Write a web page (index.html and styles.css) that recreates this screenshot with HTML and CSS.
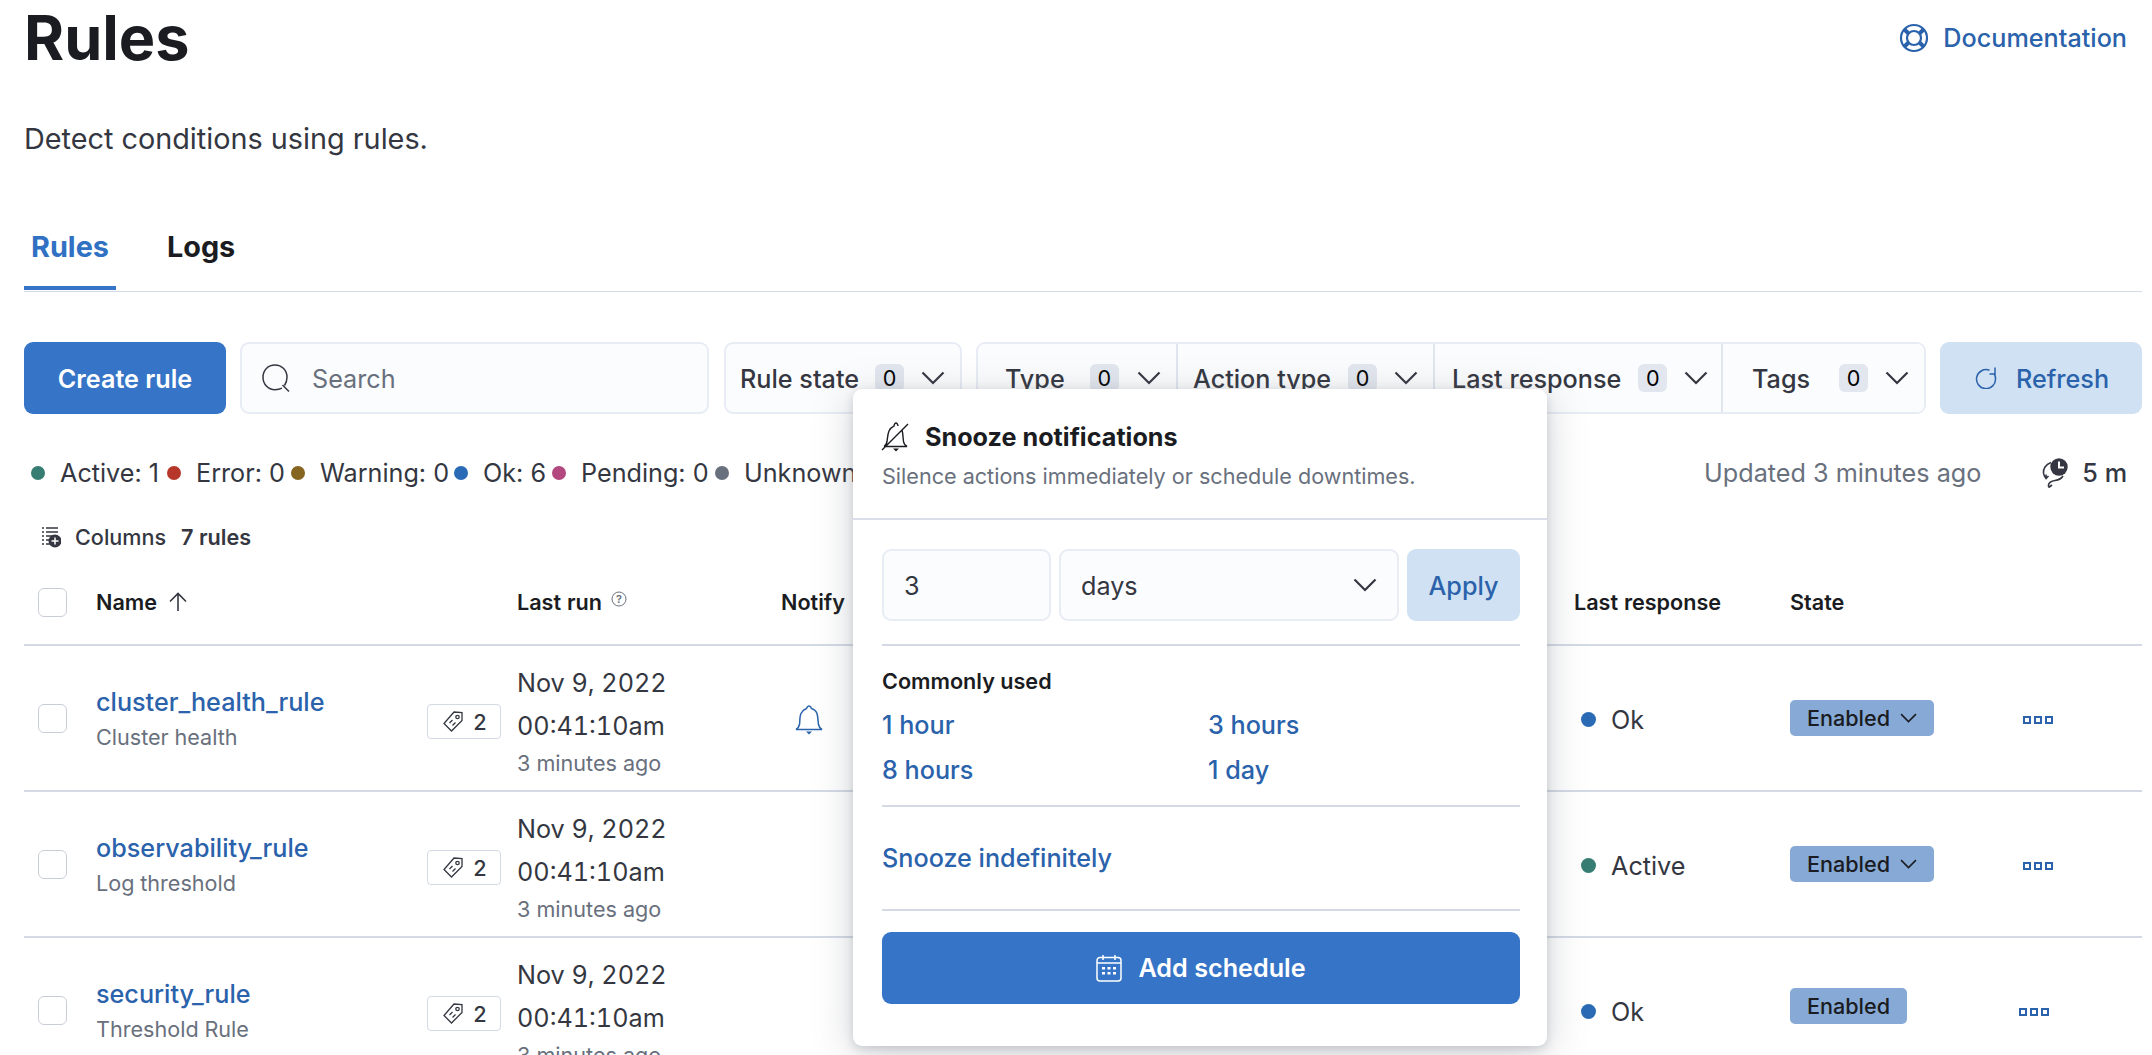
FILE: index.html
```html
<!DOCTYPE html>
<html lang="en">
<head>
<meta charset="utf-8">
<title>Rules</title>
<link rel="stylesheet" href="styles.css">
</head>
<body>
<svg class="defs" width="0" height="0" aria-hidden="true">
  <symbol id="i-chev" viewBox="0 0 24 14"><path d="M1.5 1.5 12 12 22.5 1.5" fill="none" stroke="currentColor" stroke-width="2.2"/></symbol>
  <symbol id="i-tag" viewBox="0 0 20 21"><g fill="none" stroke="currentColor" stroke-width="1.300"><path d="M11 1 19 1.500 19 9.500 8.500 20 1 12.500z"/><circle cx="14.500" cy="6" r="1.700"/><path d="M6.500 12 9.500 9M9.500 14.500 12.500 11.500"/></g></symbol>
  <symbol id="i-dots" viewBox="0 0 30 8"><g fill="none" stroke="currentColor" stroke-width="2"><rect x="1" y="1" width="6" height="6"/><rect x="12" y="1" width="6" height="6"/><rect x="23" y="1" width="6" height="6"/></g></symbol>
</svg>
<main class="page">
  <header class="head">
    <h1 class="title">Rules</h1>
    <a class="doc-link">
      <svg class="doc-icon" viewBox="0 0 30 30"><g fill="none" stroke="currentColor" stroke-width="2.200"><circle cx="15" cy="15" r="13"/><circle cx="15" cy="15" r="7"/><path d="M5.500 6.500 10 11M24.500 6.500 20 11M5.500 23.500 10 19M24.500 23.500 20 19" stroke-width="4"/></g></svg>
      <span>Documentation</span>
    </a>
  </header>
  <p class="desc">Detect conditions using rules.</p>
  <nav class="tabs">
    <span class="tab tab-active">Rules</span>
    <span class="tab">Logs</span>
  </nav>
  <section class="toolbar">
    <button class="btn-primary create">Create rule</button>
    <div class="search">
      <svg class="search-icon" viewBox="0 0 28 28"><g fill="none" stroke="currentColor" stroke-width="1.500"><path d="M20 24.200C18 25.200 16 25.700 13 25.700 6 25.700 1 20 1 13.200S6 1 13 1 25 6.500 25 13.200c0 3.500-1 6-2.500 8.300"/><path d="M20.500 21 27 27.500"/></g></svg>
      <span class="nudge">Search</span>
    </div>
    <div class="filter filter-single">
      <span class="f-label">Rule state</span><span class="count">0</span><svg class="chev"><use href="#i-chev"/></svg>
    </div>
    <div class="filter-group">
      <div class="filter f-type"><span class="f-label">Type</span><span class="count">0</span><svg class="chev"><use href="#i-chev"/></svg></div>
      <div class="filter f-action"><span class="f-label">Action type</span><span class="count">0</span><svg class="chev"><use href="#i-chev"/></svg></div>
      <div class="filter f-resp"><span class="f-label">Last response</span><span class="count">0</span><svg class="chev"><use href="#i-chev"/></svg></div>
      <div class="filter f-tags"><span class="f-label">Tags</span><span class="count">0</span><svg class="chev"><use href="#i-chev"/></svg></div>
    </div>
    <button class="refresh">
      <svg class="refresh-icon" viewBox="0 0 22 22"><g fill="none" stroke="currentColor" stroke-width="1.500"><path d="M14.500 3.300A9.500 9.500 0 1 0 20.500 11.500c0-2-.6-3.700-1.600-5"/><path d="M20 .5V7h-5.500"/></g></svg>
      <span class="nudge">Refresh</span>
    </button>
  </section>
  <section class="status">
    <div class="stat s-active"><i class="dot d-green"></i><span>Active: 1</span></div>
    <div class="stat s-error"><i class="dot d-red"></i><span>Error: 0</span></div>
    <div class="stat s-warn"><i class="dot d-gold"></i><span>Warning: 0</span></div>
    <div class="stat s-ok"><i class="dot d-blue"></i><span>Ok: 6</span></div>
    <div class="stat s-pend"><i class="dot d-pink"></i><span>Pending: 0</span></div>
    <div class="stat s-unk"><i class="dot d-gray"></i><span>Unknown: 0</span></div>
    <span class="updated">Updated 3 minutes ago</span>
    <svg class="clock-icon" viewBox="0 0 26 30"><g fill="none" stroke="currentColor" stroke-width="1.600"><path d="M9 4.500C3.500 6.500 1 11 1.500 15c.3 2.500 1.200 4 2.500 5.500l2.500-2.500M4 20.500V16.500"/><path d="M21 18c-2 3.500-5 4-8 4.500s-6 1.500-6.500 4.500c0 1 0 1.500.3 2.500M6.800 29.500l3.200-2.500"/></g><circle cx="17" cy="9" r="8.700" fill="currentColor"/><path d="M17 3.500v6h5" fill="none" stroke="#fff" stroke-width="2"/></svg>
    <span class="interval">5 m</span>
  </section>
  <section class="columns-bar">
    <svg class="col-icon" viewBox="0 0 20 22"><path d="M1 2h2M5 2h12M1 6h2M5 6h12M1 10h2M5 10h8M1 14h2M5 14h5M1 18h2M5 18h4" stroke="#343741" stroke-width="1.400" fill="none"/><circle cx="14" cy="15" r="6.500" fill="#343741"/><path d="M14 11.500v7M10.500 15h7" stroke="#fff" stroke-width="1.500"/></svg>
    <span class="col-btn">Columns</span>
    <span class="col-count">7 rules</span>
  </section>
  <section class="table">
    <div class="t-row t-head">
      <div class="c-check"><span class="checkbox"></span></div>
      <div class="c-name th"><span>Name</span><svg class="sort" viewBox="0 0 20 20"><path d="M10 19V1.500M2 9.500l8-8 8 8" fill="none" stroke="currentColor" stroke-width="1.600"/></svg></div>
      <div></div>
      <div class="c-run th"><span>Last run</span><svg class="help" viewBox="0 0 16 16"><circle cx="8" cy="8" r="7" fill="none" stroke="#69707d" stroke-width="1"/><text x="8" y="11.500" class="help-q">?</text></svg></div>
      <div class="th">Notify</div>
      <div class="th">Last response</div>
      <div class="th">State</div>
      <div></div>
    </div>
    <div class="t-row">
      <div class="c-check"><span class="checkbox"></span></div>
      <div class="c-rule"><a class="rule-name">cluster_health_rule</a><span class="rule-type">Cluster health</span></div>
      <div class="c-tag"><span class="tag"><svg class="tag-icon"><use href="#i-tag"/></svg>2</span></div>
      <div class="c-date"><span>Nov 9, 2022</span><span>00:41:10am</span><small>3 minutes ago</small></div>
      <div class="c-bell"><svg class="bell" viewBox="0 0 28 30"><g fill="none" stroke="currentColor" stroke-width="1.500"><path d="M1 24.500c2-1 3-2.500 3.500-5 .5-3 0-8 1.500-11S10 4 11.500 3.500C12 2 13 1 14 1s2 1 2.500 2.500C18 4 21 5.500 22 8.500s1 8 1.500 11c.5 2.500 1.500 4 3.500 5z"/></g><path d="M11 26.500h6l-3 3z" fill="currentColor"/></svg></div>
      <div class="resp"><i class="dot d-blue"></i><span>Ok</span></div>
      <div><span class="state">Enabled<svg class="state-chev"><use href="#i-chev"/></svg></span></div>
      <div class="c-act"><svg class="more more-shift"><use href="#i-dots"/></svg></div>
    </div>
    <div class="t-row">
      <div class="c-check"><span class="checkbox"></span></div>
      <div class="c-rule"><a class="rule-name">observability_rule</a><span class="rule-type">Log threshold</span></div>
      <div class="c-tag"><span class="tag"><svg class="tag-icon"><use href="#i-tag"/></svg>2</span></div>
      <div class="c-date"><span>Nov 9, 2022</span><span>00:41:10am</span><small>3 minutes ago</small></div>
      <div></div>
      <div class="resp"><i class="dot d-green"></i><span>Active</span></div>
      <div><span class="state">Enabled<svg class="state-chev"><use href="#i-chev"/></svg></span></div>
      <div class="c-act"><svg class="more more-shift"><use href="#i-dots"/></svg></div>
    </div>
    <div class="t-row">
      <div class="c-check"><span class="checkbox"></span></div>
      <div class="c-rule"><a class="rule-name">security_rule</a><span class="rule-type">Threshold Rule</span></div>
      <div class="c-tag"><span class="tag"><svg class="tag-icon"><use href="#i-tag"/></svg>2</span></div>
      <div class="c-date"><span>Nov 9, 2022</span><span>00:41:10am</span><small>3 minutes ago</small></div>
      <div></div>
      <div class="resp"><i class="dot d-blue"></i><span>Ok</span></div>
      <div class="c-state-plain"><span class="state">Enabled</span></div>
      <div class="c-act"><svg class="more"><use href="#i-dots"/></svg></div>
    </div>
  </section>
</main>
<aside class="popover">
  <div class="pop-head">
    <div class="pop-title">
      <svg class="snooze-icon" viewBox="0 0 28 30"><g fill="none" stroke="#1a1c21" stroke-width="1.400"><path d="M3 24.500c2-1 2.500-2.500 3-5 .5-3 .5-7 2-10.500S12 4.500 13 4c.3-1.700 1-3 2-3s1.700 1.300 2 3M21 8c1 3 1 8 1.500 11.500.4 2.500 1.500 4 3.500 5H3M1 28 27 2"/></g><path d="M12 26.500h6l-3 3z" fill="#1a1c21"/></svg>
      <span>Snooze notifications</span>
    </div>
    <p class="pop-sub">Silence actions immediately or schedule downtimes.</p>
  </div>
  <div class="pop-body">
    <div class="snooze-form">
      <div class="field f-num"><span class="nudge">3</span></div>
      <div class="field f-unit"><span class="nudge">days</span><svg class="chev"><use href="#i-chev"/></svg></div>
      <button class="apply">Apply</button>
    </div>
    <div class="pop-rule rule-a"></div>
    <h4 class="common">Commonly used</h4>
    <div class="quick">
      <a>1 hour</a><a>3 hours</a>
      <a>8 hours</a><a>1 day</a>
    </div>
    <div class="pop-rule rule-b"></div>
    <a class="indef">Snooze indefinitely</a>
    <div class="pop-rule"></div>
    <button class="btn-primary schedule">
      <svg class="cal" viewBox="0 0 26 28"><g fill="none" stroke="#fff" stroke-width="1.500"><rect x="1" y="3.500" width="24" height="23.500" rx="3"/><path d="M7 1v5M19 1v5M1 9h24"/></g><path d="M6 13h3v2.500H6zM11.500 13h3v2.500h-3zM17 13h3v2.500h-3zM6 18h3v2.500H6zM11.500 18h3v2.500h-3zM17 18h3v2.500h-3z" fill="#fff"/></svg>
      <span>Add schedule</span>
    </button>
  </div>
</aside>
</body>
</html>
```

FILE: styles.css
```css
* { box-sizing: border-box; }
html, body { margin: 0; height: 100%; overflow: hidden; background: #fff; }
body { font-family: Inter, "Noto Sans", sans-serif; color: #343741; font-size: 25.2px; position: relative; }
.defs { position: absolute; }
button { font-family: inherit; border: 0; cursor: pointer; }
a { color: #2a62ab; }
.page { padding: 0 10px 0 24px; }
.nudge { padding-top: 2px; }

.head { height: 76px; display: flex; justify-content: space-between; align-items: center; }
.title { margin: 0; font-size: 61.2px; line-height: 76px; font-weight: 700; color: #1a1c21; }
.doc-link { display: flex; align-items: center; gap: 14px; font-weight: 500; padding-right: 15px; }
.doc-icon { width: 30px; height: 30px; }
.desc { margin: 39px 0 0; height: 48px; line-height: 48px; font-size: 28.8px; }

.tabs { margin-top: 40px; height: 89px; display: flex; gap: 44px; border-bottom: 1px solid #d3dae6; }
.tab { height: 87px; line-height: 88px; padding: 0 7px; font-size: 28.8px; font-weight: 700; color: #1a1c21; }
.tab-active { color: #3171c3; border-bottom: 4px solid #3574c7; }

.toolbar { margin-top: 50px; height: 72px; display: flex; }
.btn-primary { background: #3574c7; color: #fff; border-radius: 9px; font-size: 25.2px; font-weight: 600; }
.create { width: 202px; padding-top: 2px; }
.search { margin-left: 14px; width: 469px; background: #fbfcfd; border: 2px solid #e8ecf4; border-radius: 9px; display: flex; align-items: center; padding-left: 20px; color: #69707d; }
.search-icon { width: 28px; height: 28px; color: #343741; margin-right: 22px; }
.filter { display: flex; align-items: center; height: 100%; background: #fbfcfd; color: #343741; }
.f-label { font-weight: 500; padding-top: 2px; }
.count { background: #e2e6ee; color: #000; font-size: 21.6px; height: 28px; width: 29px; border-radius: 6px; text-align: center; line-height: 28px; }
.chev { width: 24px; height: 14px; color: #343741; }
.filter-single { width: 238px; margin-left: 15px; border: 2px solid #e8ecf4; border-radius: 9px; padding-left: 14px; }
.filter-single .count { margin-left: 16px; }
.filter-single .chev { margin-left: 17px; }
.filter-group { margin-left: 14px; width: 950px; display: flex; border: 2px solid #e8ecf4; border-radius: 9px; overflow: hidden; }
.filter-group .filter { border-right: 2px solid #e0e5ef; }
.filter-group .filter:last-child { border-right: 0; }
.filter-group .count { margin-left: 18px; }
.filter-group .chev { margin-left: 17px; }
.filter-group .f-type { width: 200px; padding-left: 27px; }
.filter-group .f-type .count { margin-left: 25px; }
.filter-group .f-type .chev { margin-left: 18px; }
.filter-group .f-action { width: 257px; padding-left: 15px; }
.filter-group .f-action .count { margin-left: 17px; }
.filter-group .f-resp { width: 288px; padding-left: 17px; }
.filter-group .f-resp .count { margin-left: 17px; }
.filter-group .f-tags { flex: 1; padding-left: 29px; }
.filter-group .f-tags .count { margin-left: 29px; }
.refresh { margin-left: 14px; width: 202px; background: #cfe1f2; color: #2a62ab; border-radius: 9px; font-size: 25.2px; font-weight: 500; display: flex; align-items: center; justify-content: center; gap: 19px; padding-left: 8px; }
.refresh-icon { width: 22px; height: 22px; }

.status { margin-top: 39px; height: 40px; display: flex; align-items: center; position: relative; }
.stat { display: flex; align-items: center; gap: 15px; }
.s-active { margin-left: 7px; width: 136px; }
.s-error { width: 124px; }
.s-warn { width: 163px; }
.s-ok { width: 98px; }
.s-pend { width: 163px; }
.s-unk { width: 240px; }
.dot { width: 14px; height: 14px; border-radius: 50%; flex: none; }
.d-green { background: #387d73; }
.d-red { background: #b6372a; }
.d-gold { background: #85651f; }
.d-blue { background: #2b6bb6; }
.d-pink { background: #b3487e; }
.d-gray { background: #69707d; }
.updated { margin-left: auto; color: #69707d; }
.clock-icon { width: 26px; height: 30px; margin-left: 61px; color: #343741; }
.interval { margin-left: 14px; margin-right: 15px; font-weight: 500; }

.columns-bar { margin-top: 29px; height: 30px; display: flex; align-items: center; font-size: 21.6px; font-weight: 500; padding-left: 17px; }
.col-icon { width: 20px; height: 22px; margin-right: 14px; }
.col-count { margin-left: 15px; font-weight: 600; }

.table { margin-top: 8px; font-variant-numeric: tabular-nums; }
.t-row { display: grid; grid-template-columns: 72px 331px 90px 264px 793px 216px 229px 1fr; height: 146px; border-bottom: 2px solid #d3dae6; align-items: center; }
.t-head { height: 86px; }
.th { font-size: 21.6px; font-weight: 600; color: #1a1c21; display: flex; align-items: center; }
.c-check { padding-left: 14px; display: flex; align-items: center; }
.checkbox { width: 29px; height: 29px; border: 1.500px solid #c9ced6; border-radius: 6px; background: #fff; }
.sort { width: 20px; height: 20px; margin-left: 11px; color: #343741; }
.help { width: 16px; height: 16px; margin-left: 9px; margin-top: -7px; }
.help-q { font-size: 11px; text-anchor: middle; fill: #69707d; }
.c-rule { display: flex; flex-direction: column; gap: 8px; }
.rule-name { font-weight: 500; line-height: 30px; }
.rule-type { font-size: 21.6px; color: #69707d; line-height: 25px; }
.c-tag { margin-top: 7px; }
.tag { display: flex; align-items: center; width: 74px; height: 35px; border: 1.500px solid #d3dae6; border-radius: 4px; padding-left: 15px; font-size: 21.6px; font-weight: 500; }
.tag-icon { width: 20px; height: 21px; margin-right: 10px; color: #343741; }
.c-date { display: flex; flex-direction: column; line-height: 43px; margin-top: 3px; }
.c-date small { font-size: 21.6px; line-height: 30px; color: #69707d; font-variant-numeric: normal; }
.c-bell { display: flex; margin-top: 3px; }
.bell { width: 28px; height: 30px; color: #2a62ab; margin-left: 14px; }
.resp { display: flex; align-items: center; gap: 15px; padding-left: 7px; margin-top: 3px; }
.resp .dot { width: 15px; height: 15px; }
.state { display: inline-flex; align-items: center; height: 36px; padding: 0 17px; background: #86a9d6; color: #1a1c21; border-radius: 5px; font-size: 21.6px; font-weight: 500; }
.c-state-plain { margin-bottom: 8px; }
.state-chev { width: 17px; height: 10px; margin-left: 10px; }
.c-act { display: flex; margin-top: 3px; }
.more { width: 30px; height: 8px; color: #2a62ab; }
.more-shift { margin-left: 4px; }

.popover { position: absolute; left: 853px; top: 389px; width: 694px; height: 657px; background: #fff; border-radius: 9px; box-shadow: 0 3px 10px rgba(105,112,125,.25), 0 8px 40px rgba(105,112,125,.3); }
.pop-head { height: 131px; border-bottom: 2px solid #d9deea; padding: 32px 29px 0; }
.pop-title { display: flex; align-items: center; gap: 16px; margin-left: -1px; font-size: 25.2px; font-weight: 700; color: #1a1c21; height: 30px; padding-top: 1px; }
.snooze-icon { width: 28px; height: 30px; }
.pop-sub { margin: 10px 0 0; font-size: 21.6px; line-height: 30px; color: #69707d; }
.pop-body { padding: 29px 27px 0 29px; }
.snooze-form { display: flex; height: 72px; }
.field { display: flex; align-items: center; background: #fbfcfd; border: 2px solid #e8ecf4; border-radius: 9px; padding: 0 20px; }
.f-num { width: 169px; }
.f-unit { width: 340px; margin-left: 8px; justify-content: space-between; }
.apply { margin-left: 8px; flex: 1; background: #cfe1f2; color: #2a62ab; font-size: 25.2px; font-weight: 500; border-radius: 9px; padding-top: 2px; }
.pop-rule { height: 2px; background: #d3dae6; }
.rule-a { margin-top: 23px; }
.common { margin: 23px 0 0; font-size: 21.6px; line-height: 24px; font-weight: 600; color: #1a1c21; }
.quick { margin-top: 17px; display: grid; grid-template-columns: 326px 1fr; row-gap: 15px; line-height: 30px; font-weight: 500; }
.rule-b { margin-top: 20px; }
.indef { display: block; height: 102px; line-height: 102px; font-weight: 500; }
.schedule { margin-top: 21px; width: 100%; height: 72px; display: flex; align-items: center; justify-content: center; gap: 16px; }
.cal { width: 26px; height: 28px; }
```
